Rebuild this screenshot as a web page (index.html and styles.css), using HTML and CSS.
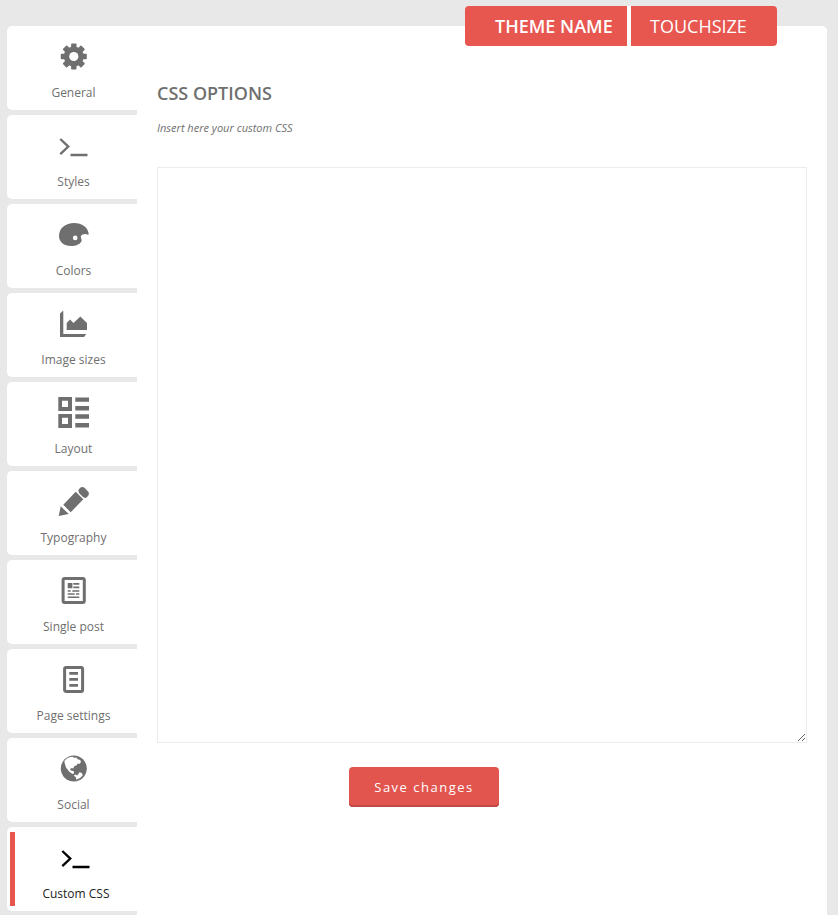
FILE: index.html
```html
<!DOCTYPE html>
<html lang="en">
<head>
<meta charset="utf-8">
<title>Theme options</title>
<link rel="stylesheet" href="styles.css">
</head>
<body>
<div class="panel">
  <nav class="tabs">
    <a class="tab">
      <svg class="icon" viewBox="0 0 31 32"><g transform="translate(15.8 15.5)"><rect x="-2.7" y="-13" width="5.4" height="26" rx=".8"/><rect x="-13" y="-2.7" width="26" height="5.4" rx=".8"/><g transform="rotate(45)"><rect x="-2.9" y="-13" width="5.8" height="26" rx=".8"/><rect x="-13" y="-2.9" width="26" height="5.8" rx=".8"/></g><circle r="10"/><circle r="4.600" class="hole"/></g></svg>
      <span>General</span>
    </a>
    <a class="tab">
      <svg class="icon" viewBox="0 0 31 32"><path class="line" d="M2.300 9l8 7.600-8 7.600M12.500 25h17"/></svg>
      <span>Styles</span>
    </a>
    <a class="tab">
      <svg class="icon" viewBox="0 0 31 32"><path d="M1 17C1 9 8 4 16 4c8 0 14 4 14.800 11.500-1.500.6-2.800-.8-4.600-.3-2.800.2-4 1.600-3.200 3.800.5 1.500 1.200 2.300.2 3.800C21.500 25.700 17.500 27 13 27 6 27 1 23 1 17z"/><circle cx="17.200" cy="18.900" r="2.300" class="hole"/></svg>
      <span>Colors</span>
    </a>
    <a class="tab">
      <svg class="icon" viewBox="0 0 31 32"><path d="M2 5.500l3.300-3V26H28.300L26 29H2zM8.700 15l3.300-3.500 3.500 3.500 6.800-6.500 6.700 6.500v7H8.700z"/></svg>
      <span>Image sizes</span>
    </a>
    <a class="tab">
      <svg class="icon" viewBox="0 0 31 32"><path fill-rule="evenodd" d="M.3 0H14v14H.3zM4 3.700V10h6V3.700zM.3 17H14v14H.3zM4 20.700V27h6v-6.300zM17.300.4H31v4.300H17.300zM17.300 9H31v4.500H17.300zM17.300 17.300H31v4.400H17.300zM17.300 26H31v4.600H17.300z"/></svg>
      <span>Layout</span>
    </a>
    <a class="tab">
      <svg class="icon" viewBox="0 0 31 32"><path d="M.7 30l2-9.700 8 7.700zM5.300 18.700l12.400-13 7.600 7.600-12.600 13zM20.700 3.500q3-4 6.300-1.300l3 3.300q2.500 3-1.800 6.300-2.200.4-3.700-1.300l-3-3q-1.600-2-.8-4z"/></svg>
      <span>Typography</span>
    </a>
    <a class="tab">
      <svg class="icon" viewBox="0 0 31 32"><rect class="frame" x="5.100" y="3.500" width="21.200" height="24" rx="1.500"/><path d="M9.700 8h4.700v5.300H9.700zM15.300 8h6v1.800h-6zM15.300 11.500h6v1.800h-6zM9.700 15.300h3v1.400h-3zM14.300 15.300h7v1.400h-7zM9.700 18.300h7v1.400h-7zM18 18.300h3.300v1.400H18zM9.700 21.500h11.600v1.500H9.700z"/></svg>
      <span>Single post</span>
    </a>
    <a class="tab">
      <svg class="icon" viewBox="0 0 31 32"><rect class="frame" x="6.600" y="3.500" width="18" height="24" rx="1.500"/><path d="M11.300 8H20v2.700h-8.700zM11.300 14H20v2.700h-8.700zM11.300 20H20v2.700h-8.700z"/></svg>
      <span>Page settings</span>
    </a>
    <a class="tab">
      <svg class="icon" viewBox="0 0 31 32"><circle cx="15.800" cy="15.500" r="13"/><path class="hole" d="M6.300 8q2-2.500 5-3.800l3.200-.4 1.600 1 2.300-.3 1.300 1.700 2.500.9.800 2.200-1.800 1.700-1.700-.6-.6 1.800-2.400.7-1.300 2.500-1.500-.5-1.800 1.300 1.600 1.500 2.200.4.400 2.200-1.600.8-2.900-2.200-3.500-4.200-1.300-4zM15.700 22.500l1.700-1 1.800 1 2.400-3.300 2.200.8 1 2.300q-2.500 3.500-6.500 4.500l-.3-2.300z"/></svg>
      <span>Social</span>
    </a>
    <a class="tab active">
      <svg class="icon" viewBox="0 0 31 32"><path class="line" d="M2.300 9l8 7.600-8 7.600M12.500 25h17"/></svg>
      <span>Custom CSS</span>
    </a>
  </nav>
  <main class="content">
    <h1>CSS OPTIONS</h1>
    <p class="hint">Insert here your custom CSS</p>
    <textarea class="code" aria-label="Custom CSS"></textarea>
    <button class="save">Save changes</button>
  </main>
  <div class="badge"><b>THEME NAME</b><span>TOUCHSIZE</span></div>
</div>
</body>
</html>
```
FILE: styles.css
```css
* { box-sizing: border-box; }
body {
  margin: 0;
  height: 915px;
  overflow: hidden;
  padding: 26px 11px 0 7px;
  background: #e8e8e8;
  color: #6f6f6f;
  font-family: "Open Sans", sans-serif;
}
.panel {
  position: relative;
  display: flex;
  height: 889px;
  background: #fff;
  border-radius: 5px 5px 0 0;
}
.tabs {
  display: flex;
  flex-direction: column;
  gap: 5px;
  width: 130px;
  background: #e8e8e8;
}
.tab {
  flex: none;
  display: flex;
  flex-direction: column;
  align-items: center;
  height: 84px;
  padding: 15px 0 0 3px;
  background: #fff;
  border-radius: 5px 0 0 5px;
  font-size: 12px;
  line-height: 18px;
}
.icon { display: block; width: 31px; height: 32px; margin-bottom: 11px; fill: #6f6f6f; }
.hole { fill: #fff; }
.line { fill: none; stroke: #6f6f6f; stroke-width: 2.3; }
.frame { fill: none; stroke: #6f6f6f; stroke-width: 3; }
.active {
  padding: 15px 0 0;
  border-left: 8px solid transparent;
  background: linear-gradient(#e7564f, #e7564f) 3px 5px / 5px 74px no-repeat border-box, #fff;
  color: #222;
}
.active .icon { margin-right: 1px; }
.active .line { stroke: #000; }
.content { flex: 1; padding: 54px 20px 0; }
h1 { margin: 0; font-size: 18px; line-height: 26px; font-weight: 600; }
.hint { margin: 13px 0 30px; font-size: 11px; line-height: 18px; font-style: italic; }
.code {
  display: block;
  width: 650px;
  height: 576px;
  border: 1px solid #ececec;
  background: #fff;
  outline: none;
  resize: both;
}
.save {
  display: block;
  width: 150px;
  height: 40px;
  margin: 24px 0 0 192px;
  padding: 0 0 1px;
  border: 0;
  border-radius: 4px;
  background: #e2544e;
  box-shadow: inset 0 -2px #bf4944;
  color: #fff;
  font: 13px "Open Sans", sans-serif;
  letter-spacing: 1.5px;
}
.badge {
  position: absolute;
  top: -20px;
  right: 50px;
  display: flex;
  width: 312px;
  height: 40px;
  border-radius: 4px;
  overflow: hidden;
  background: #e7564f;
  color: #fff;
  font-size: 18px;
  line-height: 40px;
}
.badge b { width: 166px; padding-left: 30px; border-right: 4px solid #fff; font-weight: 600; white-space: nowrap; }
.badge span { padding-left: 19px; }
```
